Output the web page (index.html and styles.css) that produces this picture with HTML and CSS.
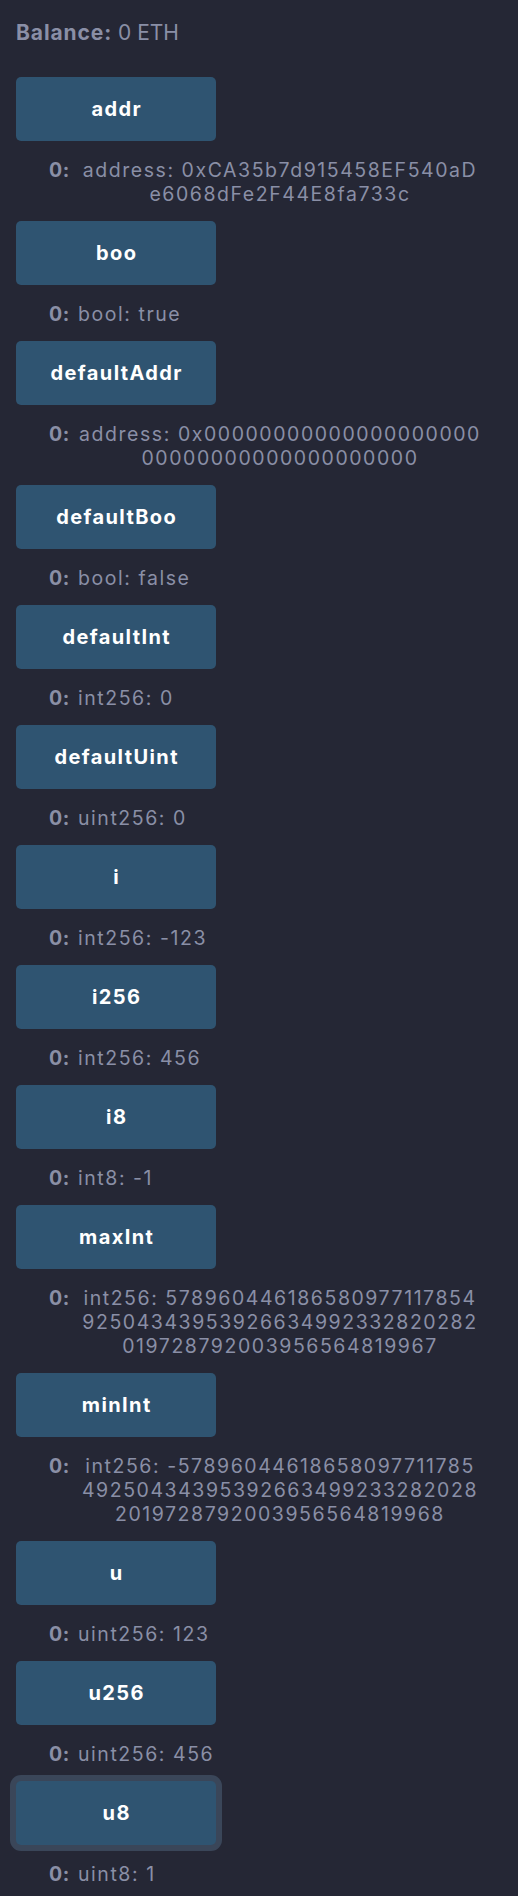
FILE: index.html
```html
<!DOCTYPE html>
<html>
<head>
<meta charset="utf-8">
<link rel="stylesheet" href="styles.css">
</head>
<body>
<div class="panel">
  <div class="balance"><b>Balance:</b> 0 ETH</div>
  <div class="list">
    <div class="item">
      <button class="btn">addr</button>
      <div class="out"><span class="lbl">0:</span><span class="val multi">address: 0xCA35b7d915458EF540aD<br>e6068dFe2F44E8fa733c</span></div>
    </div>
    <div class="item">
      <button class="btn">boo</button>
      <div class="out"><span class="lbl">0:</span><span class="val">bool: true</span></div>
    </div>
    <div class="item">
      <button class="btn">defaultAddr</button>
      <div class="out"><span class="lbl">0:</span><span class="val multi">address: 0x00000000000000000000<br>00000000000000000000</span></div>
    </div>
    <div class="item">
      <button class="btn">defaultBoo</button>
      <div class="out"><span class="lbl">0:</span><span class="val">bool: false</span></div>
    </div>
    <div class="item">
      <button class="btn">defaultInt</button>
      <div class="out"><span class="lbl">0:</span><span class="val">int256: 0</span></div>
    </div>
    <div class="item">
      <button class="btn">defaultUint</button>
      <div class="out"><span class="lbl">0:</span><span class="val">uint256: 0</span></div>
    </div>
    <div class="item">
      <button class="btn">i</button>
      <div class="out"><span class="lbl">0:</span><span class="val">int256: -123</span></div>
    </div>
    <div class="item">
      <button class="btn">i256</button>
      <div class="out"><span class="lbl">0:</span><span class="val">int256: 456</span></div>
    </div>
    <div class="item">
      <button class="btn">i8</button>
      <div class="out"><span class="lbl">0:</span><span class="val">int8: -1</span></div>
    </div>
    <div class="item">
      <button class="btn">maxInt</button>
      <div class="out"><span class="lbl">0:</span><span class="val multi">int256: 578960446186580977117854<br>92504343953926634992332820282<br>019728792003956564819967</span></div>
    </div>
    <div class="item">
      <button class="btn">minInt</button>
      <div class="out"><span class="lbl">0:</span><span class="val multi">int256: -57896044618658097711785<br>49250434395392663499233282028<br>2019728792003956564819968</span></div>
    </div>
    <div class="item">
      <button class="btn">u</button>
      <div class="out"><span class="lbl">0:</span><span class="val">uint256: 123</span></div>
    </div>
    <div class="item">
      <button class="btn">u256</button>
      <div class="out"><span class="lbl">0:</span><span class="val">uint256: 456</span></div>
    </div>
    <div class="item">
      <button class="btn focused">u8</button>
      <div class="out"><span class="lbl">0:</span><span class="val">uint8: 1</span></div>
    </div>
  </div>
</div>
</body>
</html>
```

FILE: styles.css
```css
html, body {
  margin: 0;
  padding: 0;
  background: #252735;
}
body {
  font-family: Inter, "Noto Sans", sans-serif;
  color: #8a8fa6;
}
.panel {
  padding: 21px 16px 0 16px;
}
.balance {
  font-size: 21px;
  line-height: 24px;
  margin-bottom: 32px;
}
.balance b {
  font-weight: 700;
  letter-spacing: 0.9px;
}
.list {
  display: flex;
  flex-direction: column;
}
.item {
  display: flex;
  flex-direction: column;
  align-items: flex-start;
}
.btn {
  width: 200px;
  height: 64px;
  border: none;
  border-radius: 5px;
  background: #2f5471;
  color: #ffffff;
  font-family: Inter, "Noto Sans", sans-serif;
  font-size: 20px;
  font-weight: 700;
  letter-spacing: 1.4px;
  padding: 0 0 0 1.4px;
  cursor: pointer;
}
.btn.focused {
  box-shadow: 0 0 0 6px #3a4659;
}
.out {
  display: flex;
  align-items: flex-start;
  margin: 17px 0 15px 0;
  padding-left: 33px;
  width: 433px;
  font-size: 19.5px;
  line-height: 24px;
  letter-spacing: 1.55px;
  box-sizing: content-box;
}
.lbl {
  font-weight: 700;
  flex: none;
  width: 29px;
  letter-spacing: 0.5px;
}
.val {
  flex: 0 1 auto;
  text-align: center;
  white-space: nowrap;
}
.val.multi {
  flex: 1 1 auto;
}
```
